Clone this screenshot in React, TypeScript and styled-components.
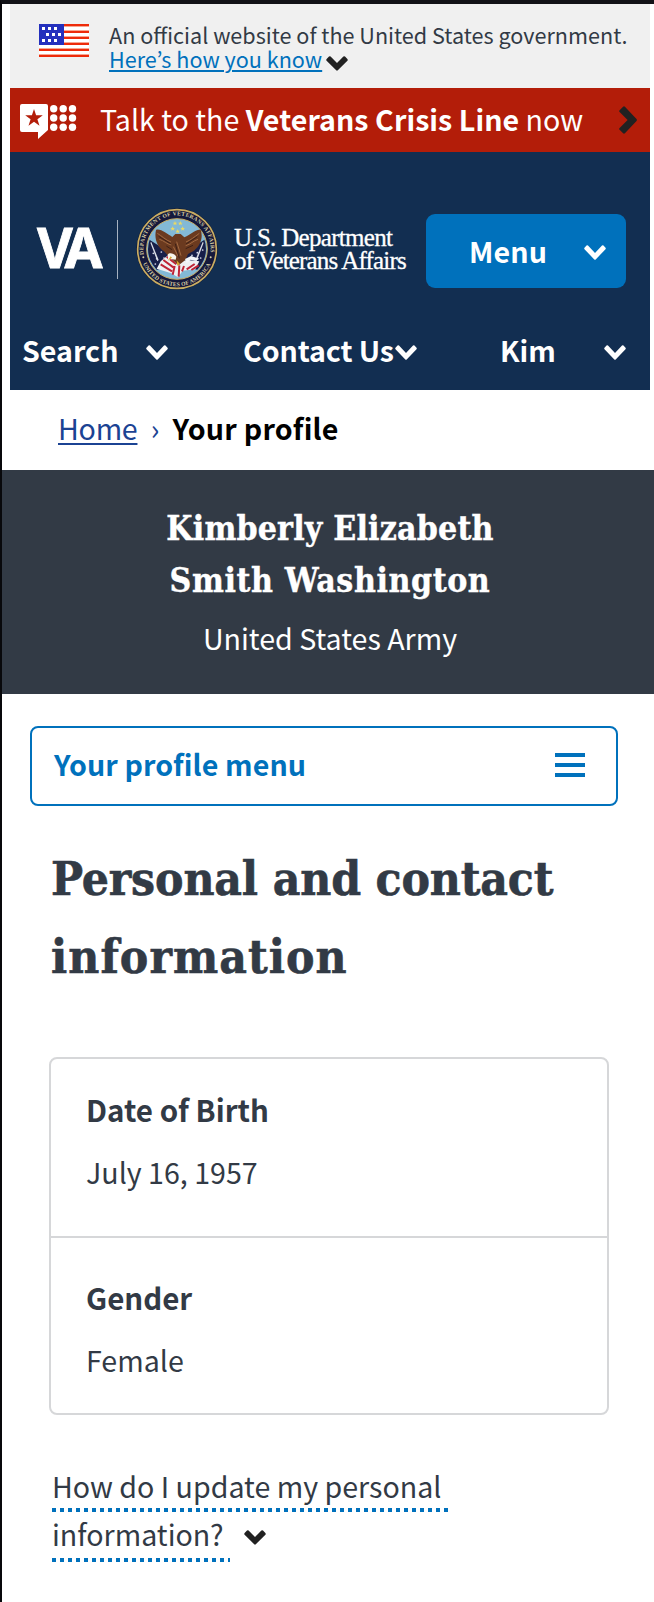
import React from 'react';
import styled, { createGlobalStyle } from 'styled-components';

const sans = '"Noto Sans CJK JP", "Noto Sans", sans-serif';
const slab = '"DejaVu Serif Condensed", "DejaVu Serif", serif';
const ink = '#323a45';
const blue = '#0071bc';
const navy = '#122e51';

const GlobalStyle = createGlobalStyle`
  * { box-sizing: border-box; }
  body { margin: 0; background: #fff; font-family: ${sans}; font-size: 28.6px; color: ${ink}; }
  h1, h2, h3, p, dl, dt, dd { margin: 0; font: inherit; }
  button { font: inherit; border: 0; padding: 0; background: none; color: inherit; text-align: left; }
  svg { display: block; flex: none; }
`;

const Page = styled.div`
  width: 654px;
  height: 1602px;
  border-top: 4px solid #121217;
  border-left: 2px solid #08080b;
  background: #fff;
  overflow: hidden;
`;

const SiteHeader = styled.header`
  margin: 0 4px 0 8px;
`;

const Text = styled.span<{ $ls?: number; $bold?: boolean }>`
  white-space: pre;
  letter-spacing: ${(p) => p.$ls ?? 0}px;
  font-weight: ${(p) => (p.$bold ? 700 : 400)};
`;

const GovBanner = styled.div`
  display: flex;
  height: 84px;
  padding: 20px 0 0 29px;
  gap: 20px;
  background: #f0f0f0;
`;

const GovCopy = styled.div`
  margin-top: -1px;
  font-size: 21.6px;
  line-height: 24px;
`;

const GovRow = styled.div`
  display: flex;
  align-items: flex-start;
  gap: 4px;
  height: 24px;
`;

const GovIcon = styled.span`
  margin-top: 9px;
`;

const GovLink = styled.a`
  color: ${blue};
  line-height: 24px;
  white-space: nowrap;
  text-decoration: underline;
  text-decoration-thickness: 2px;
  text-underline-offset: 2px;
`;

const CrisisBar = styled.div`
  display: flex;
  align-items: center;
  height: 64px;
  padding: 0 13px 0 10px;
  background: #b31d09;
  color: #fff;
  line-height: 60px;
`;

const CrisisSymbol = styled.span`
  padding-top: 4px;
`;

const CrisisText = styled.span`
  flex: 1;
  margin: 0 0 2px 23px;
  white-space: pre;
`;

const Masthead = styled.div`
  height: 238px;
  background: ${navy};
  color: #fff;
`;

const BrandRow = styled.div`
  display: flex;
  align-items: center;
  height: 136px;
  padding: 58px 24px 0 27px;
`;

const VaMark = styled.span`
  width: 65px;
  font: 700 55px/76px "Noto Sans", sans-serif;
  letter-spacing: -6px;
  margin-top: -4px;
  -webkit-text-stroke: 0.8px #fff;
`;

const Rule = styled.span`
  width: 1px;
  height: 59px;
  margin: 0 18px 0 15px;
  background: #a6b2c1;
`;

const Department = styled.span`
  width: 192px;
  margin-left: 16px;
  font: 25px/23px "Liberation Serif", serif;
  -webkit-text-stroke: 0.3px #fff;
  white-space: nowrap;
`;

const MenuButton = styled.button`
  display: flex;
  align-items: center;
  justify-content: space-between;
  width: 200px;
  height: 74px;
  margin-top: 4px;
  padding: 2px 20px 0 43px;
  border-radius: 9px;
  background: ${blue};
`;

const MenuLabel = styled.span`
  margin-top: -3px;
`;

const NavRow = styled.nav`
  display: flex;
  align-items: center;
  height: 48px;
  margin-top: 40px;
  padding: 0 24px 0 12px;
`;

const NavItem = styled.button<{ $width: number; $before?: number }>`
  display: flex;
  align-items: center;
  justify-content: space-between;
  width: ${(p) => p.$width}px;
  margin-left: ${(p) => p.$before ?? 0}px;
  line-height: 44px;
  white-space: nowrap;

  & > span { margin-bottom: 5px; }
`;

const Breadcrumb = styled.nav`
  display: flex;
  height: 80px;
  padding-left: 56px;
  line-height: 76px;
  color: #1b4393;
`;

const Crumb = styled.a`
  letter-spacing: -0.25px;
  text-decoration: underline;
  text-decoration-thickness: 2px;
  text-underline-offset: 3px;
`;

const CrumbMark = styled.span`
  width: 35px;
  text-align: center;
`;

const CrumbCurrent = styled.span`
  color: #000;
  font-weight: 700;
  letter-spacing: 0.25px;
`;

const Hero = styled.section`
  display: flex;
  flex-direction: column;
  align-items: center;
  height: 224px;
  padding: 33px 0 0 4px;
  background: #323a45;
  color: #fff;
  text-align: center;
`;

const HeroName = styled.h2`
  font-family: ${slab};
  font-weight: 700;
  font-size: 33.5px;
  line-height: 52px;
  -webkit-text-stroke: 0.4px #fff;
`;

const HeroBranch = styled.p`
  margin-top: 7px;
  line-height: 47px;
`;

const ProfileMenu = styled.button`
  display: flex;
  align-items: center;
  justify-content: space-between;
  width: 588px;
  height: 80px;
  margin: 32px 0 0 28px;
  padding: 0 31px 2px 22px;
  border: 2px solid ${blue};
  border-radius: 8px;
  color: ${blue};
  line-height: 72px;

  & > span { margin-bottom: 2px; }
`;

const PageTitle = styled.h1`
  margin: 34px 0 0 49px;
  font-family: ${slab};
  font-weight: 700;
  font-size: 47.5px;
  line-height: 77.5px;
  height: 156px;
  -webkit-text-stroke: 0.6px ${ink};
`;

const InfoCard = styled.dl`
  width: 560px;
  height: 358px;
  margin: 61px 0 0 47px;
  border: 2px solid #d6d7d9;
  border-radius: 8px;
`;

const InfoEntry = styled.div<{ $top: number; $height: number }>`
  height: ${(p) => p.$height}px;
  padding: ${(p) => p.$top}px 0 0 35px;
  & + & { border-top: 2px solid #d6d7d9; }
`;

const InfoTerm = styled.dt`
  font-size: 29.5px;
  font-weight: 700;
  line-height: 44px;
`;

const InfoValue = styled.dd`
  padding-top: 19px;
  line-height: 44px;
`;

const HelpToggle = styled.button`
  display: block;
  margin: 51px 0 0 50px;
`;

const HelpLine = styled.span<{ $height: number }>`
  display: flex;
  align-items: flex-start;
  height: ${(p) => p.$height}px;
`;

const Dotted = styled.span<{ $width: number; $height: number }>`
  width: ${(p) => p.$width}px;
  height: ${(p) => p.$height}px;
  line-height: 40px;
  white-space: nowrap;
  background: repeating-linear-gradient(90deg, ${blue} 0 4px, transparent 4px 8px) left bottom / 100% 4px no-repeat;
`;

const ToggleIcon = styled.span`
  margin: 16px 0 0 14px;
`;

function Chevron({ color = '#fff' }: { color?: string }) {
  const light = color === '#fff';
  return (
    <svg width="22" height="15" viewBox="0 0 22 15" fill={color}>
      <path
        d={
          light
            ? 'M.5 2.8 2.5.6Q3.2-.1 4 .6L11 8.1 18 .6Q18.8-.1 19.5.6L21.5 2.8Q22.1 3.5 21.5 4.2L11.7 14.5Q11 15.1 10.3 14.5L.5 4.2Q-.1 3.5.5 2.8Z'
            : 'M0.6 3.1 3 .6Q3.8-.1 4.6.6L11 7 17.4.6Q18.2-.1 19 .6L21.4 3.1Q22.1 3.9 21.4 4.7L11.8 14.3Q11 15 10.2 14.3L.6 4.7Q-.1 3.9.6 3.1Z'
        }
      />
    </svg>
  );
}

function ArrowRight() {
  return (
    <svg width="18" height="28" viewBox="0 0 18 28" fill="#212121">
      <path d="M.6 4.2 4.1.7Q5-.2 5.9.7L17.5 13.1Q18.3 14 17.5 14.9L5.9 27.3Q5 28.2 4.1 27.3L.6 23.8Q-.3 22.9.6 22L8.6 14 .6 6Q-.3 5.1.6 4.2Z" />
    </svg>
  );
}

function Flag() {
  const stars = [[3, 3], [9, 3], [15, 3], [7, 9], [13, 9], [19, 9], [3, 15], [9, 15], [15, 15]];
  return (
    <svg width="50" height="33" viewBox="0 0 50 33" shapeRendering="crispEdges">
      <rect width="50" height="33" fill="#fff" />
      {[0, 6, 12, 18, 24, 30].map((y) => (
        <React.Fragment key={y}>
          <rect y={y} width="50" height="3" fill="#f7a792" />
          <rect y={y + (y > 0 ? 1 : 0)} width="50" height="2" fill="#ee2b0a" />
        </React.Fragment>
      ))}
      <rect width="25" height="21" fill="#2430bd" />
      {stars.map(([x, y]) => (
        <rect key={`${x}-${y}`} x={x} y={y} width="3" height="3" fill="#fff" />
      ))}
    </svg>
  );
}

function CrisisIcon() {
  return (
    <svg width="57" height="36" viewBox="0 0 57 36" fill="#fff">
      <path d="M2 0H26Q28 0 28 2V26L18 35V28H2Q0 28 0 26V2Q0 0 2 0Z" />
      <path fill="#b31d09" d="M14 5 16.1 11.3H22.8L17.4 15.3 19.5 21.8 14 17.8 8.5 21.8 10.6 15.3 5.2 11.3H11.9Z" />
      {[4.7, 14, 23.3].map((y) => [33.7, 43.2, 52.5].map((x) => <circle key={`${x}${y}`} cx={x} cy={y} r="3.7" />))}
    </svg>
  );
}

function Seal() {
  const stars = [[117, 46], [133, 46], [110, 62], [140, 62], [125, 70]];
  return (
    <svg width="82" height="82" viewBox="0 0 246 246">
      <defs>
        <path id="sealTop" d="M26 151A101 101 0 1 1 220 151" />
        <path id="sealBottom" d="M16 150A110 110 0 0 0 230 150" />
        <clipPath id="sealDisc"><circle cx="123" cy="123" r="87" /></clipPath>
      </defs>
      <circle cx="123" cy="123" r="122" fill="#0c1632" />
      <circle cx="123" cy="123" r="118" fill="#15193c" stroke="#c9ad62" strokeWidth="5" />
      <circle cx="123" cy="123" r="91" fill="#83b9d6" stroke="#c9ad62" strokeWidth="3" />
      <g fill="#d9cfa5" fontFamily="Liberation Serif, serif" fontWeight="700" fontSize="17">
        <text><textPath href="#sealTop" startOffset="3%" textLength="345">DEPARTMENT OF VETERANS AFFAIRS</textPath></text>
        <text><textPath href="#sealBottom" startOffset="6%" textLength="256">UNITED STATES OF AMERICA</textPath></text>
      </g>
      <g clipPath="url(#sealDisc)">
        <path fill="#171f49" d="M38 94 76 118 104 143 92 178 48 190 30 150ZM208 94 170 118 142 143 158 178 198 190 218 150Z" />
        <path fill="#d9dce5" d="M43 104 46 102 68 156 64 160ZM200 102 203 104 182 160 178 156Z" />
        {[[52, 136], [62, 152], [58, 168], [76, 132], [84, 150], [184, 134], [194, 150], [184, 162], [168, 142], [200, 126]].map(([x, y]) => (
          <circle key={`${x}${y}`} cx={x} cy={y} r="2.6" fill="#d6dbe9" />
        ))}
        <path fill="#eef0f2" d="M74 160 98 140 124 165 152 156 190 160 178 184 140 188 126 208 106 196 62 182Z" />
        <path fill="none" stroke="#bf2436" strokeWidth="6" d="M82 156 112 178M74 169 108 190M92 146 121 169M116 174 110 200M130 172 128 206M144 174 138 190M176 168 152 184M188 172 166 186" />
      </g>
      <path fill="#6b3a1f" d="M60 66C72 60 94 78 109 87L118 78 134 78 145 88C160 84 180 62 194 66C202 88 194 112 174 128L156 138 148 156 128 172 102 149 84 130C64 118 54 92 60 66Z" />
      <path fill="none" stroke="#a26a42" strokeWidth="3" d="M64 76C78 84 88 96 105 102M70 94C84 98 92 108 106 111M190 76C174 88 164 96 150 102M186 94C172 98 164 109 149 113M112 116 126 144M122 101 135 143" />
      <path fill="none" stroke="#341b14" strokeWidth="2.5" d="M68 85 104 107M184 86 150 108M91 114 108 125M171 112 149 122M118 107 130 151" />
      <path fill="#f7f5eb" d="M95 140C100 132 115 136 121 146L119 155 104 153 97 160Z" />
      <path fill="#d6a32d" d="M108 149 95 159 104 145ZM122 157 132 168 124 173Z" />
      <path fill="#f4f7fa" d="M147 153 165 144 190 152 178 159 164 155 152 166Z" />
      {stars.map(([x, y]) => (
        <path key={`${x}${y}`} transform={`translate(${x} ${y})`} fill="#edda62" d="M0-7 2-2H7L3 1 5 6 0 3-5 6-3 1-7-2H-2Z" />
      ))}
      <circle cx="22" cy="148" r="3" fill="#d9cfa5" /><circle cx="224" cy="148" r="3" fill="#d9cfa5" />
    </svg>
  );
}

function MenuBars() {
  return (
    <svg width="30" height="24" viewBox="0 0 30 24" fill={blue}>
      <path d="M0 0H30V4H0ZM0 10H30V14H0ZM0 20H30V24H0Z" />
    </svg>
  );
}

export default function App() {
  return (
    <Page>
      <GlobalStyle />
      <SiteHeader>
        <GovBanner>
          <Flag />
          <GovCopy>
            <GovRow><Text>An official website of the United States government.</Text></GovRow>
            <GovRow>
              <GovLink>Here’s how you know</GovLink>
              <GovIcon><Chevron color="#212121" /></GovIcon>
            </GovRow>
          </GovCopy>
        </GovBanner>
        <CrisisBar>
          <CrisisSymbol><CrisisIcon /></CrisisSymbol>
          <CrisisText>Talk to the <Text $bold $ls={0.05}>Veterans Crisis Line</Text> now</CrisisText>
          <ArrowRight />
        </CrisisBar>
        <Masthead>
          <BrandRow>
            <VaMark>VA</VaMark>
            <Rule />
            <Seal />
            <Department>
              <Text $ls={-0.7}>U.S. Department</Text><br />
              <Text $ls={-0.85}>of Veterans Affairs</Text>
            </Department>
            <MenuButton><MenuLabel><Text $bold $ls={0.1}>Menu</Text></MenuLabel><Chevron /></MenuButton>
          </BrandRow>
          <NavRow>
            <NavItem $width={146}><Text $bold>Search</Text><Chevron /></NavItem>
            <NavItem $width={174} $before={75}><Text $bold $ls={-0.1}>Contact Us</Text><Chevron /></NavItem>
            <NavItem $width={126} $before={83}><Text $bold>Kim</Text><Chevron /></NavItem>
          </NavRow>
        </Masthead>
      </SiteHeader>
      <Breadcrumb>
        <Crumb>Home</Crumb>
        <CrumbMark>›</CrumbMark>
        <CrumbCurrent>Your profile</CrumbCurrent>
      </Breadcrumb>
      <Hero>
        <HeroName>
          <Text $bold $ls={0.2}>Kimberly Elizabeth</Text><br />
          <Text $bold $ls={0.6}>Smith Washington</Text>
        </HeroName>
        <HeroBranch>United States Army</HeroBranch>
      </Hero>
      <ProfileMenu><Text $bold $ls={0.1}>Your profile menu</Text><MenuBars /></ProfileMenu>
      <PageTitle>
        <Text $bold $ls={-0.15}>Personal and contact</Text><br />
        <Text $bold $ls={1.05}>information</Text>
      </PageTitle>
      <InfoCard>
        <InfoEntry $top={28} $height={177}>
          <InfoTerm>Date of Birth</InfoTerm>
          <InfoValue>July 16, 1957</InfoValue>
        </InfoEntry>
        <InfoEntry $top={37} $height={177}>
          <InfoTerm>Gender</InfoTerm>
          <InfoValue>Female</InfoValue>
        </InfoEntry>
      </InfoCard>
      <HelpToggle>
        <HelpLine $height={48}><Dotted $width={397} $height={46}>How do I update my personal</Dotted></HelpLine>
        <HelpLine $height={48}>
          <Dotted $width={178} $height={48}>information?</Dotted>
          <ToggleIcon><Chevron color="#212121" /></ToggleIcon>
        </HelpLine>
      </HelpToggle>
    </Page>
  );
}
